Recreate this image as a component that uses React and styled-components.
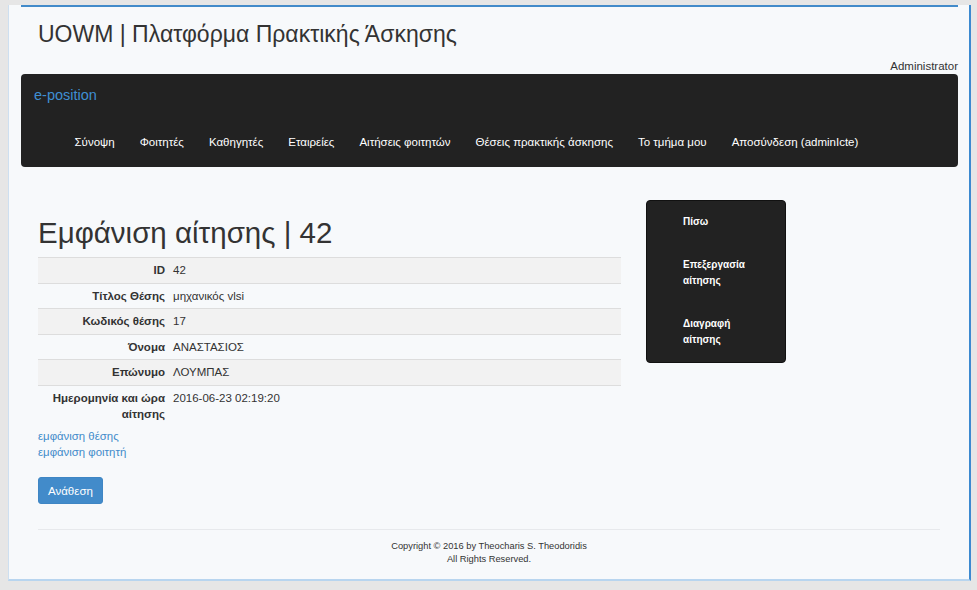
import React from "react";
import styled, { createGlobalStyle } from "styled-components";

const GlobalStyle = createGlobalStyle`
  html, body {
    margin: 0;
    padding: 0;
    background: #e6e6e6;
    font-family: "Liberation Sans", Arial, sans-serif;
    color: #333;
  }
  * {
    box-sizing: border-box;
  }
`;

export const Frame = styled.div`
  margin: 5px 0 0 8px;
  width: 963px;
  height: 576px;
  background: #f7f9fb;
  border-left: 1px solid #cddff0;
  border-right: 2px solid #3c8ad0;
  border-bottom: 2px solid #b8d5ef;
  padding: 0 11px 0 12px;
`;

export const Container = styled.div`
  border-top: 2px solid #428bca;
`;

export const SiteTitle = styled.h1`
  margin: 13px 0 0;
  padding-left: 17px;
  font-size: 23px;
  line-height: 28px;
  font-weight: normal;
  color: #333;
`;

export const UserLine = styled.div`
  margin-top: 11px;
  margin-bottom: 1px;
  text-align: right;
  font-size: 11.5px;
  line-height: 14px;
  color: #333;
`;

export const Navbar = styled.nav`
  background: #222;
  border-radius: 4px;
  padding: 11px 13px 16px;
`;

export const Brand = styled.a`
  display: block;
  font-size: 14.5px;
  line-height: 20px;
  color: #3f8fd2;
  text-decoration: none;
`;

export const Menu = styled.ul`
  display: flex;
  list-style: none;
  margin: 29px 0 0 28px;
  padding: 0;
`;

export const MenuItem = styled.li`
  padding: 0 12.5px;
  font-size: 11.5px;
  line-height: 17px;
  color: #fff;
  white-space: nowrap;
`;

export const Main = styled.div`
  display: flex;
  align-items: flex-start;
  gap: 25px;
  margin-top: 33px;
  padding-left: 17px;
`;

export const Content = styled.div`
  width: 583px;
`;

export const Heading = styled.h2`
  margin: 16px 0 8px;
  font-size: 29.5px;
  line-height: 33px;
  font-weight: normal;
  color: #333;
`;

export const Table = styled.table`
  width: 100%;
  border-collapse: collapse;
  font-size: 11.5px;
  line-height: 16.5px;
`;

export const Row = styled.tr`
  background: ${(p) => (p.$odd ? "#f2f2f2" : "transparent")};
  border-top: 1px solid #dddddd;
`;

export const Label = styled.th`
  width: 131px;
  padding: 4px;
  text-align: right;
  vertical-align: top;
  font-weight: bold;
  color: #333;
`;

export const Value = styled.td`
  padding: 4px;
  vertical-align: top;
  color: #333;
`;

export const Links = styled.div`
  margin-top: 1.5px;
`;

export const Link = styled.a`
  display: block;
  font-size: 11.4px;
  line-height: 16px;
  color: #428bca;
  text-decoration: none;
`;

export const Button = styled.button`
  margin-top: 17px;
  height: 27px;
  padding: 0 9px;
  background: #428bca;
  border: 1px solid #3f86c4;
  border-radius: 3px;
  color: #fff;
  font: inherit;
  font-size: 11.5px;
  cursor: pointer;
`;

export const Sidebar = styled.ul`
  list-style: none;
  margin: 0;
  padding: 0 22px 0 36px;
  width: 140px;
  background: #222;
  border-radius: 4px;
  border: 1px solid #111;
`;

export const SideItem = styled.li`
  padding: 12.5px 0 14.5px;
  font-size: 10px;
  line-height: 16px;
  font-weight: bold;
  color: #fff;
`;

export const Footer = styled.footer`
  margin: 25px 18px 0 17px;
  padding-top: 10px;
  border-top: 1px solid #e7e9ec;
  text-align: center;
  font-size: 9.3px;
  line-height: 13px;
  color: #333;
`;

const rows = [
  ["ID", "42"],
  ["Τίτλος Θέσης", "μηχανικός vlsi"],
  ["Κωδικός θέσης", "17"],
  ["Όνομα", "ΑΝΑΣΤΑΣΙΟΣ"],
  ["Επώνυμο", "ΛΟΥΜΠΑΣ"],
  ["Ημερομηνία και ώρα αίτησης", "2016-06-23 02:19:20"],
];

const menu = [
  "Σύνοψη",
  "Φοιτητές",
  "Καθηγητές",
  "Εταιρείες",
  "Αιτήσεις φοιτητών",
  "Θέσεις πρακτικής άσκησης",
  "Το τμήμα μου",
  "Αποσύνδεση (adminIcte)",
];

const actions = ["Πίσω", "Επεξεργασία αίτησης", "Διαγραφή αίτησης"];

export default function App() {
  return (
    <>
      <GlobalStyle />
      <Frame>
        <Container>
          <SiteTitle>UOWM | Πλατφόρμα Πρακτικής Άσκησης</SiteTitle>
          <UserLine>Administrator</UserLine>
          <Navbar>
            <Brand href="#">e-position</Brand>
            <Menu>
              {menu.map((m) => (
                <MenuItem key={m}>{m}</MenuItem>
              ))}
            </Menu>
          </Navbar>
          <Main>
            <Content>
              <Heading>Εμφάνιση αίτησης | 42</Heading>
              <Table>
                <tbody>
                  {rows.map(([k, v], i) => (
                    <Row key={k} $odd={i % 2 === 0}>
                      <Label>{k}</Label>
                      <Value>{v}</Value>
                    </Row>
                  ))}
                </tbody>
              </Table>
              <Links>
                <Link href="#">εμφάνιση θέσης</Link>
                <Link href="#">εμφάνιση φοιτητή</Link>
              </Links>
              <Button>Ανάθεση</Button>
            </Content>
            <Sidebar>
              {actions.map((a) => (
                <SideItem key={a}>{a}</SideItem>
              ))}
            </Sidebar>
          </Main>
          <Footer>
            Copyright © 2016 by Theocharis S. Theodoridis
            <br />
            All Rights Reserved.
          </Footer>
        </Container>
      </Frame>
    </>
  );
}
